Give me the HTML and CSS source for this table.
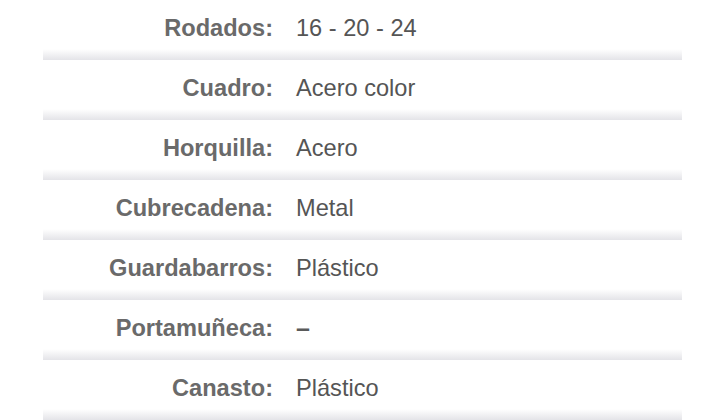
FILE: index.html
```html
<!DOCTYPE html>
<html lang="es">
<head>
<meta charset="utf-8">
<link rel="stylesheet" href="styles.css">
</head>
<body>
<div class="specs">
  <div class="row"><div class="label">Rodados:</div><div class="value">16 - 20 - 24</div></div>
  <div class="row"><div class="label">Cuadro:</div><div class="value">Acero color</div></div>
  <div class="row"><div class="label">Horquilla:</div><div class="value">Acero</div></div>
  <div class="row"><div class="label">Cubrecadena:</div><div class="value">Metal</div></div>
  <div class="row"><div class="label">Guardabarros:</div><div class="value">Plástico</div></div>
  <div class="row"><div class="label">Portamuñeca:</div><div class="value dash">–</div></div>
  <div class="row"><div class="label">Canasto:</div><div class="value">Plástico</div></div>
</div>
</body>
</html>
```
FILE: styles.css
```css
html, body {
  margin: 0;
  padding: 0;
  background: #ffffff;
}
body {
  font-family: "Liberation Sans", Arial, sans-serif;
}
.specs {
  width: 639px;
  margin-left: 43px;
}
.row {
  display: grid;
  grid-template-columns: 230px 1fr;
  column-gap: 23px;
  align-items: center;
  height: 60px;
  padding-bottom: 4px;
  box-sizing: border-box;
  background: linear-gradient(to bottom, #ffffff 0, #ffffff calc(100% - 11px), #e4e4e8 100%);
}
.label {
  text-align: right;
  font-weight: bold;
  font-size: 23.6px;
  color: #6a6a6a;
}
.value {
  font-size: 23.6px;
  color: #555555;
}
.value.dash {
  font-weight: bold;
  font-size: 25px;
  color: #5a5a5a;
}
```
